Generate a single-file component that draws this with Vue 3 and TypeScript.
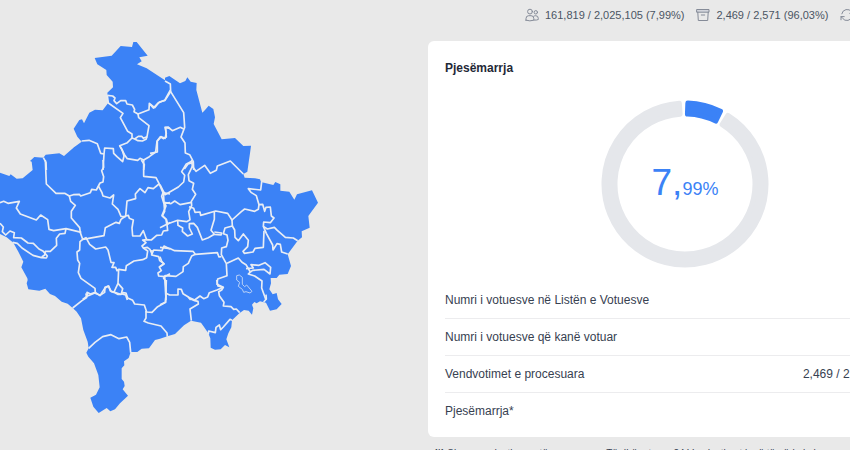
<script setup lang="ts">
interface BorderSheet {
  x: number
  y: number
  lines: string[]
}

interface ResultRow {
  label: string
  value: string
}

const outline =
  '400,126 410,126 443,167 418,172 425,184 411,193 440,205 495,241 495,233 508,228 540,250 556,243 562,232 572,245 590,249 589,270 607,338 615,330 626,317 640,327 645,352 641,372 665,418 705,414 730,438 753,437 750,460 747,480 742,515 730,522 734,533 765,535 780,538 783,546 792,548 820,555 826,546 841,553 841,572 868,575 883,599 891,583 936,571 954,608 925,648 929,683 905,694 906,712 893,722 863,763 873,798 863,822 838,824 830,834 812,834 813,850 808,868 818,883 830,879 834,898 845,912 830,928 810,932 798,908 780,904 770,910 763,906 756,914 760,925 756,944 746,932 732,930 718,940 696,961 694,982 685,1000 679,1018 688,1042 675,1035 662,1048 645,1049 632,1043 631,1015 625,1000 610,978 603,968 573,962 552,976 525,1002 502,1009 480,1016 465,1020 447,1045 425,1046 412,1056 392,1056 386,1074 372,1084 373,1096 365,1105 365,1137 372,1145 374,1158 368,1168 384,1187 360,1210 345,1228 331,1234 320,1224 296,1239 280,1220 271,1193 288,1184 299,1162 295,1125 282,1090 265,1070 259,1058 266,1045 263,1025 250,990 243,955 230,935 218,924 203,911 185,905 165,888 150,882 136,866 118,872 85,868 80,850 83,840 82,835 64,802 70,785 55,755 40,728 20,712 0,702 -10,690 -10,500 0,518 28,528 32,523 50,536 68,535 98,510 95,485 90,483 103,471 130,473 137,464 178,460 192,468 222,442 245,425 232,410 221,386 238,360 246,358 252,370 268,338 285,329 308,331 325,308 322,278 339,262 338,245 320,225 319,210 292,193 284,174 335,167 362,138 396,141'

const lake =
  '710,827 718,825 727,832 727,853 734,860 740,855 756,874 750,879 738,875 731,877 727,868 715,859 719,847 710,840'

const sheets: BorderSheet[] = [
  {
    x: 0,
    y: 90,
    lines: [
      '322,196 338,198 345,204 342,212 350,221 362,212 377,212 381,222 397,225 404,238 402,245 414,252 447,239 448,220 460,234 474,219 494,211 508,186 511,180',
      '322,196 325,219 369,250 361,263 383,304 396,312 396,324 404,327 415,319 425,319 430,325 441,320 447,287 416,263 414,252',
      '404,327 414,332 427,333 438,328 441,320',
      '396,324 382,338 359,347 374,375 382,386 413,391 420,385 431,390 448,380 467,366 471,334 481,320 491,326 499,321 497,293 510,295',
      '359,347 366,358 372,378 368,395 351,380 341,370 340,356 314,354 312,372 309,420',
      '245,333 267,331 292,341 302,370 312,372',
      '130,383 138,397 139,420',
      '424,390 433,404 431,420',
    ],
  },
  {
    x: 450,
    y: 90,
    lines: [
      '45,153 61,162 62,185 45,211 28,216 14,233 0,222',
      '62,185 101,248 104,292 93,321 105,339 106,369 119,374 130,395 131,420',
      '0,370 22,366 22,333 34,320 45,325 49,310 45,292 54,291 67,302 91,292 101,297',
      '130,397 114,402 103,417',
    ],
  },
  {
    x: 0,
    y: 480,
    lines: [
      '136,0 139,72 168,100 194,100 208,108 220,104 238,103 242,108 271,98 275,88 289,90 300,69 309,66 311,50 305,32 311,22 309,0',
      '431,0 431,49 468,53 477,70 489,98 510,102',
      '477,72 460,86 444,83 435,98 420,86 406,102 407,116 381,123 377,168',
      '295,78 306,98 309,108 330,114 341,105 337,132 354,148 363,169 377,170',
      '208,108 212,124 226,136 214,154 214,174 239,203 241,218 248,238 262,236 312,227 316,203 348,187 358,190 363,178 377,168 385,166 388,175 400,180 396,204 398,228 420,228 430,212 440,239',
      '0,128 11,124 24,130 58,124 49,144 61,162 109,180 122,165 143,179 147,208 161,212 198,206 244,217',
      '0,190 10,201 7,215 17,225 30,213 43,218 41,233 64,234 84,249 100,250 117,267 130,274 142,288 139,294 124,293 99,286 66,264 52,250 38,247',
      '198,206 195,220 179,222 169,235 170,256 151,274 136,274 134,285 125,291',
      '248,238 240,245 239,270 231,276 233,300 239,310 235,338 243,355 285,385 286,397 271,402 261,397 262,408 248,418',
      '248,238 258,233 269,253 287,267 317,261 324,270 333,307 342,308 336,322 347,322 351,332 356,328 354,370 342,396 331,393 326,378 315,384 300,407 286,397',
      '356,328 377,331 379,317 402,303 428,299 440,293 443,273 430,264 426,258 438,248 428,240 440,239 454,240 470,226 485,225 490,213 503,211 501,194 510,187',
      '489,98 485,109 492,131 494,154 487,168 499,178 503,192',
      '492,131 510,128',
      '430,264 442,262 450,268 456,282 461,270 486,272 492,258 510,267',
      '456,270 455,285 476,290 479,302 492,311 478,321 484,332 474,339 476,348 494,350 510,341',
      '494,350 498,420',
      '354,370 368,386 364,401 377,405 382,420',
      '342,396 361,403',
    ],
  },
  {
    x: 480,
    y: 480,
    lines: [
      '95,0 97,19 108,34 134,16 151,40 169,31 172,18 211,3 250,42',
      '95,4 78,13 65,35 74,46 71,66 55,81 15,104 0,74',
      '97,19 85,44 87,62 101,70 97,88 107,103 94,124 95,137 86,155 90,179 80,185 53,181 22,192 0,203',
      '10,93 12,127 33,131 44,123 60,134 95,127',
      '12,127 18,138 6,166 18,178 20,192',
      '87,140 101,145 105,157 120,156 122,166 167,153 203,160 216,180 244,155 254,147 284,154 295,148 297,134 308,133 314,154 318,142 331,141 334,168 342,174 331,188 311,186 310,199 322,207 343,202 352,211 376,232 400,234 413,242',
      '305,66 302,90 265,86 273,97 289,107 297,134',
      '163,155 163,178 153,211 163,223 183,225 185,219 163,216',
      '53,181 54,196 68,204 67,214 83,228 97,222 88,204 88,191 101,190 112,202 127,240 145,233 163,223',
      '216,180 217,198 195,204 190,221 201,225 204,241 199,260 185,264 184,284 199,311 201,347 173,357 171,373 190,382',
      '217,198 224,210 225,232 235,242 250,222 265,241 263,260 249,274 253,280 279,276 285,265 310,262 312,212',
      '310,199 319,220 338,255 339,270 351,251 361,253 365,276 383,282',
      '0,262 31,266 44,272 99,274 106,283 172,278 177,291 184,290',
      '106,283 95,288 85,310 70,320 69,335 48,349 15,347 10,353',
      '201,310 235,294 246,307 258,314 271,336 265,342 284,348 306,363 305,384 318,420',
      '258,326 280,324 273,314 297,316 315,308 332,322 330,342 312,328 278,331 271,336',
      '0,290 5,304 12,312 0,320',
      '10,353 17,363 18,400 29,405 54,405 54,387 64,388 69,401 84,410 92,420',
    ],
  },
  {
    x: 0,
    y: 840,
    lines: [
      '218,84 246,62 260,53 258,42 265,47 284,39 300,46 314,37 315,22 325,18 334,35 342,37 353,43 363,43 369,38 378,39 383,54 398,61 404,72 433,75 440,96 456,97 473,80 497,67 499,0',
      '438,93 438,114 432,124 445,129 483,138 501,159 502,170',
      '266,205 285,187 308,170 333,164 357,176 380,171 389,187 392,218',
    ],
  },
  {
    x: 480,
    y: 840,
    lines: [
      '0,74 16,67 18,43',
      '92,57 104,62 114,64 115,72 90,87 94,122',
      '84,51 104,60 120,48 131,56 143,51 148,38 171,30 190,22 174,18 170,0',
      '190,22 185,30 176,35 178,47 192,67 190,78 213,80 221,88 229,87 239,98',
      '145,163 146,153 166,158 168,142 178,135 182,149 190,141 210,118 216,121',
      '318,44 319,57 311,66',
    ],
  },
]

const rows: ResultRow[] = [
  { label: 'Numri i votuesve në Listën e Votuesve', value: '2,025,105' },
  { label: 'Numri i votuesve që kanë votuar', value: '161,819' },
  { label: 'Vendvotimet e procesuara', value: '2,469 / 2,571 (96,03%)' },
  { label: 'Pjesëmarrja*', value: '7,99%' },
]

function arc(from: number, to: number): string {
  const inner = 70
  const outer = 81
  const point = (radius: number, degrees: number): string => {
    const angle = (degrees * Math.PI) / 180
    return `${(radius * Math.sin(angle)).toFixed(2)} ${(-radius * Math.cos(angle)).toFixed(2)}`
  }
  const large = to - from > 180 ? 1 : 0
  return `M${point(outer, from)}A${outer} ${outer} 0 ${large} 1 ${point(outer, to)}L${point(inner, to)}A${inner} ${inner} 0 ${large} 0 ${point(inner, from)}Z`
}

const votedArc = arc(2, 26)
const remainingArc = arc(32, 356)
</script>

<template>
  <main class="page">
    <section class="map" aria-label="Harta e komunave">
      <svg viewBox="0 0 960 1350">
        <polygon class="land" :points="outline" />
        <g v-for="sheet in sheets" :key="`${sheet.x}-${sheet.y}`" :transform="`translate(${sheet.x} ${sheet.y})`">
          <polyline v-for="line in sheet.lines" :key="line" class="border" :points="line" />
        </g>
        <polygon class="lake" :points="lake" />
      </svg>
    </section>

    <div class="results">
      <header class="stats">
        <span class="stat">
          <svg class="icon" viewBox="0 0 14 14">
            <circle cx="5" cy="3.6" r="2.4" />
            <circle cx="10.8" cy="4.3" r="1.7" />
            <path d="M1 12.2V10.6Q1 7.7 3.7 7.7H6.1Q8.8 7.7 8.8 10.6V12.2Q5 13.6 1 12.2ZM8.7 8.2Q9.5 7.7 10.7 7.7Q13.3 7.7 13.3 10.5V11.5Q12 12.3 9 12.1" />
          </svg>
          161,819 / 2,025,105 (7,99%)
        </span>
        <span class="stat">
          <svg class="icon" viewBox="0 0 14 14">
            <path class="lid" d="M1 1.5H13V4.2H1Z" />
            <path d="M1.8 4.2 2.3 12.5H11.7L12.2 4.2M5.3 7H8.7" />
          </svg>
          2,469 / 2,571 (96,03%)
        </span>
        <span class="stat">
          <svg class="icon" viewBox="0 0 14 14">
            <path d="M1.8 5.8A5.4 5.4 0 0 1 11.5 3.8L13 5.4M13 2.2V5.4H9.8M12.2 8.2A5.4 5.4 0 0 1 2.5 10.2L1 8.6M1 11.8V8.6H4.2" />
          </svg>
        </span>
      </header>

      <section class="card">
        <h2>Pjesëmarrja</h2>
        <div class="chart">
          <svg viewBox="-84 -84 168 168">
            <path class="remaining" :d="remainingArc" />
            <path class="voted" :d="votedArc" />
          </svg>
          <p class="percent"><span class="whole">7,</span>99%</p>
        </div>
        <table>
          <tbody>
            <tr v-for="row in rows" :key="row.label">
              <th scope="row">{{ row.label }}</th>
              <td>{{ row.value }}</td>
            </tr>
          </tbody>
        </table>
      </section>
      <p class="note"><b>(*)</b> Sipas vendvotimeve të procesuara. Të dhënat nga 24 Vendvotimet janë të përkohshme</p>
    </div>
  </main>
</template>

<style>
body {
  background: #e9e9e9;
  overflow: hidden;
}
</style>

<style scoped>
.page {
  display: grid;
  grid-template-columns: minmax(0, 1fr) minmax(0, 1fr);
  column-gap: 6px;
  height: 100vh;
  overflow: hidden;
  font-family: "Liberation Sans", Arial, sans-serif;
  color: #374151;
}

.map svg {
  display: block;
  width: 320px;
  height: 450px;
}

.land {
  fill: #3b82f6;
}

.border,
.lake {
  fill: none;
  stroke: #e9edf4;
  stroke-width: 5;
  stroke-linejoin: round;
}

.lake {
  stroke: #b9d1f6;
  stroke-width: 3;
}

.results {
  min-width: 514px;
}

.stats {
  display: flex;
  gap: 12px;
  height: 30px;
  padding-left: 97px;
  margin-bottom: 11px;
  font-size: 11px;
  white-space: nowrap;
  color: #4b5563;
}

.stat {
  display: flex;
  align-items: center;
  gap: 6px;
}

.icon {
  width: 14px;
  height: 14px;
  fill: none;
  stroke: #858b98;
  stroke-width: 1;
  stroke-linejoin: round;
  stroke-linecap: round;
}

.lid {
  fill: #d3d5dc;
}

.card {
  padding: 17px 17px 8px;
  border-radius: 6px;
  background: #fff;
}

h2 {
  margin: 0;
  font-size: 12px;
  line-height: 20px;
  color: #1f2937;
}

.chart {
  display: grid;
  place-items: center;
  width: 168px;
  margin: 22px auto 14px 156px;
}

.chart > * {
  grid-area: 1 / 1;
}

.chart svg {
  width: 168px;
  height: 168px;
}

.voted,
.remaining {
  stroke-width: 5;
  stroke-linejoin: round;
}

.voted {
  fill: #3b82f6;
  stroke: #3b82f6;
}

.remaining {
  fill: #e5e7eb;
  stroke: #e5e7eb;
}

.percent {
  margin: 0;
  padding-top: 4px;
  font-size: 18px;
  line-height: 40px;
  color: #3b82f6;
}

.whole {
  font-size: 37px;
}

table {
  width: 100%;
  border-collapse: collapse;
  font-size: 12px;
  line-height: 16px;
}

th,
td {
  padding: 10px 0;
  font-weight: 400;
}

th {
  text-align: left;
}

td {
  text-align: right;
}

tr + tr {
  border-top: 1px solid #ececee;
}

.note {
  margin: 10px 6px 0;
  font-size: 10px;
  line-height: 14px;
  white-space: nowrap;
}
</style>
